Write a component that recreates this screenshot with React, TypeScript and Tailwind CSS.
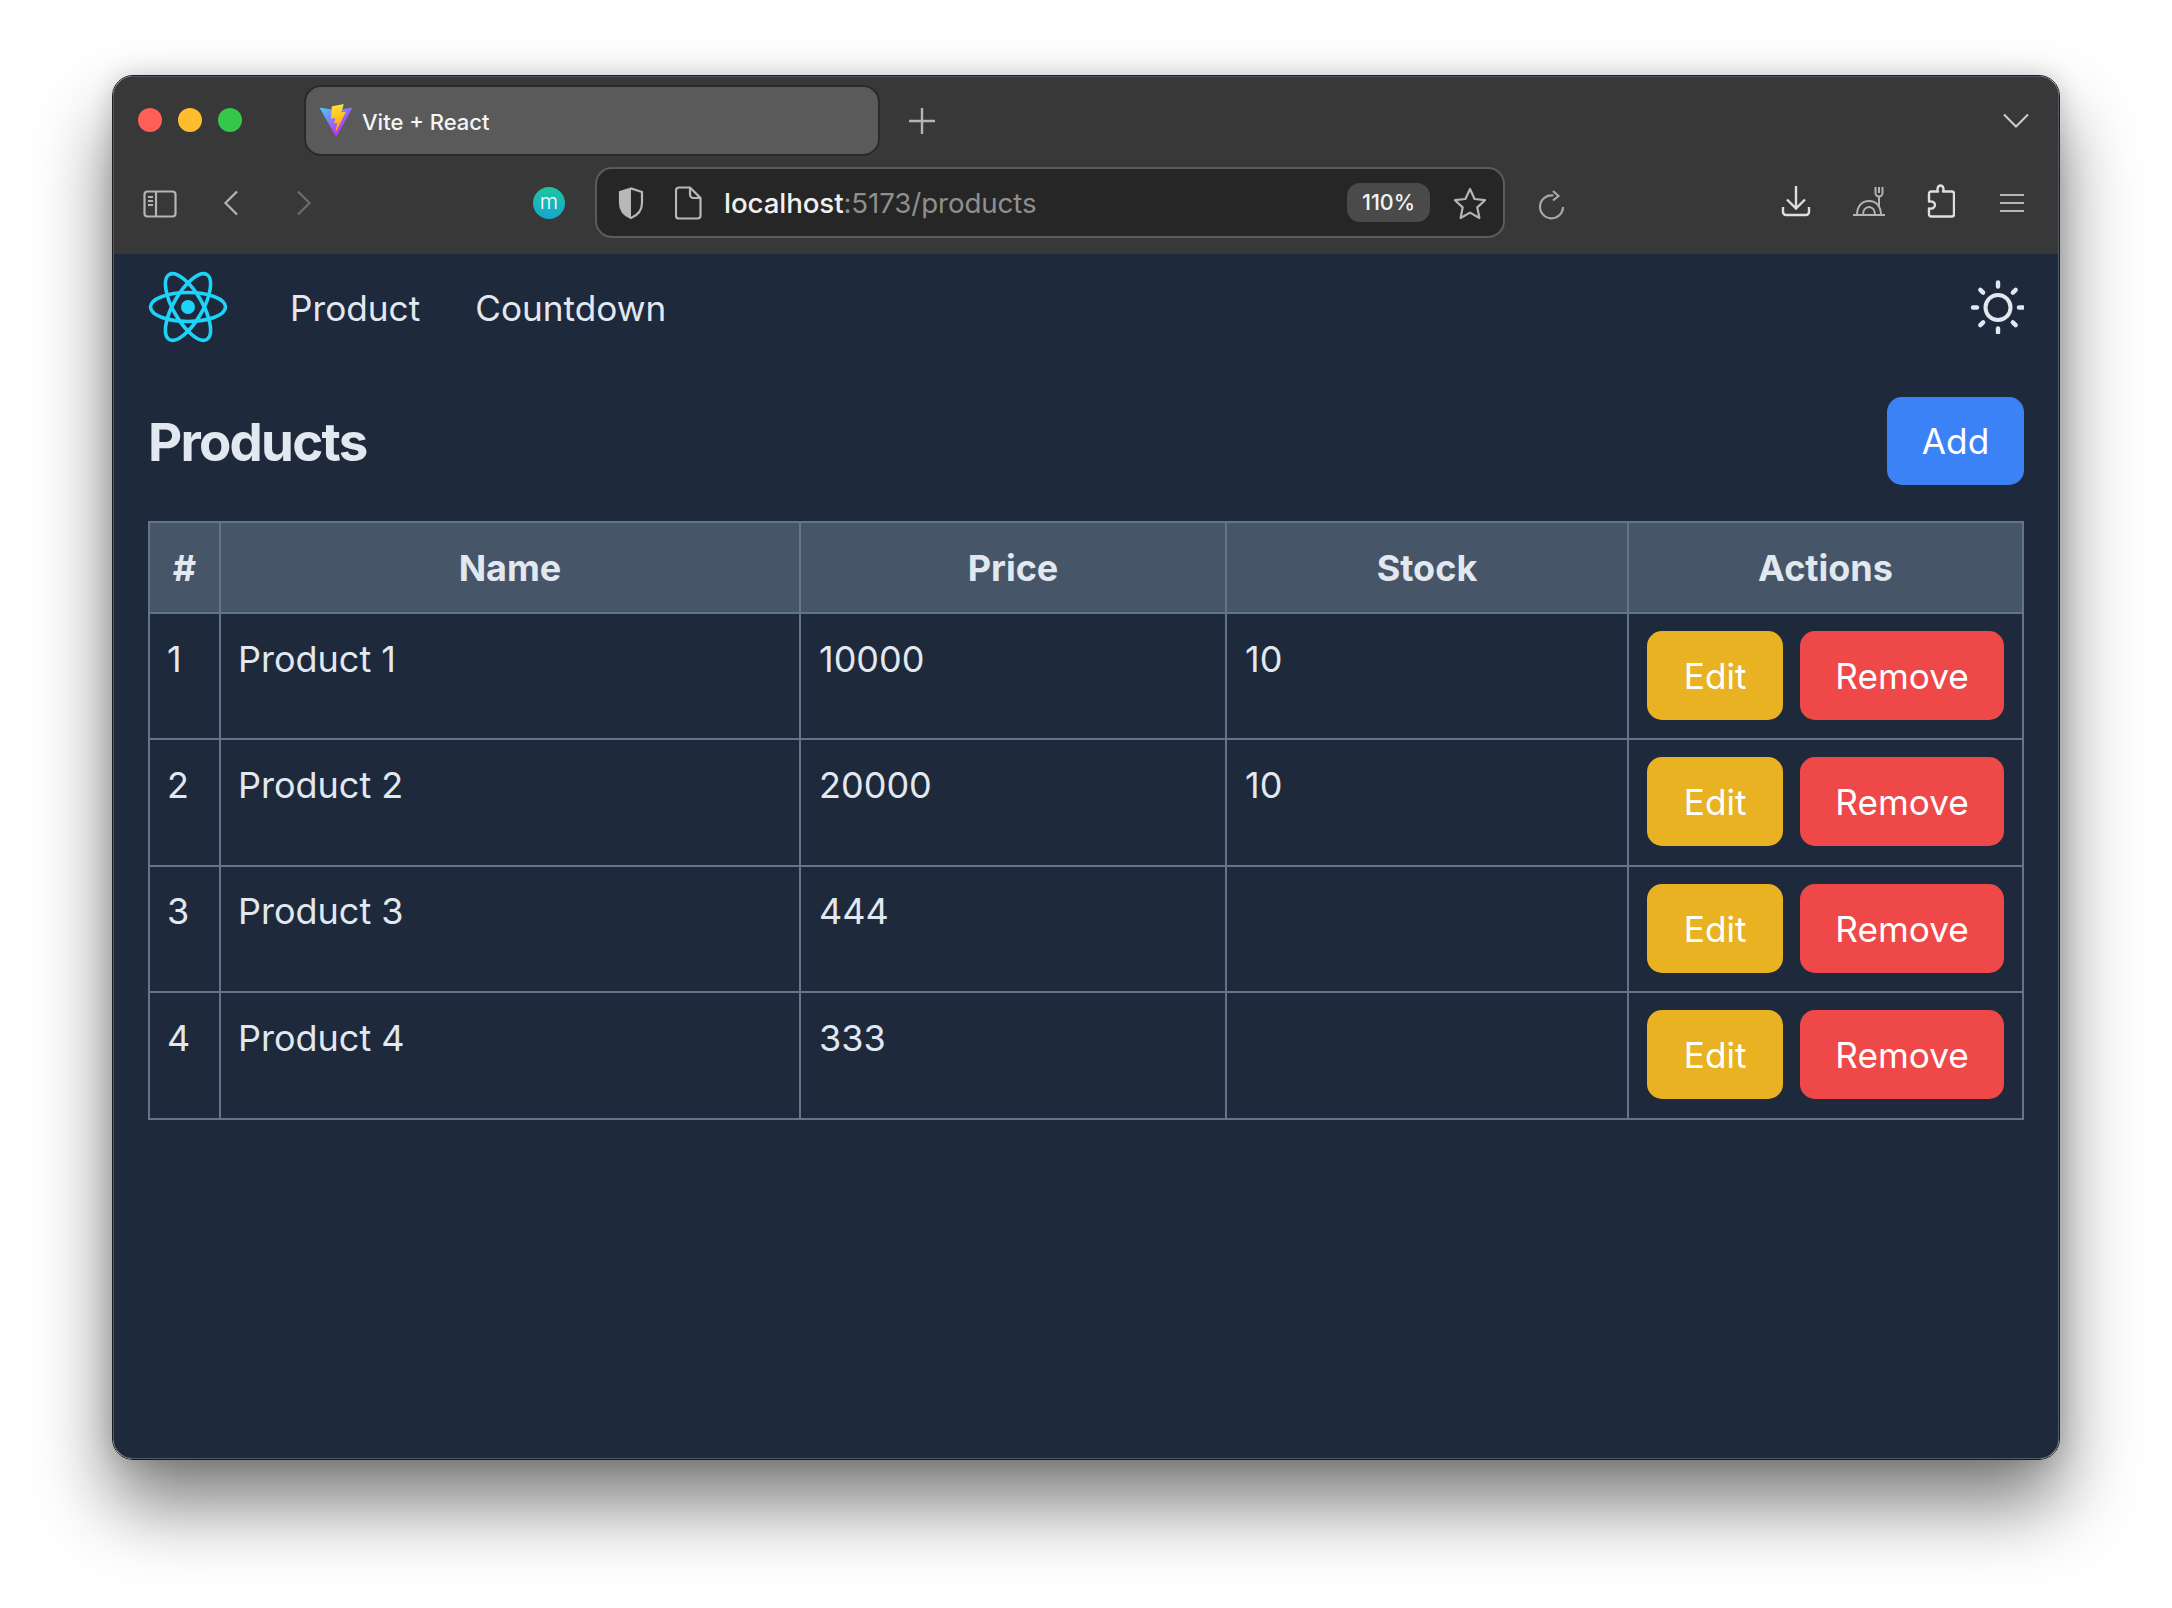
const products = [
  { id: 1, name: 'Product 1', price: '10000', stock: '10' },
  { id: 2, name: 'Product 2', price: '20000', stock: '10' },
  { id: 3, name: 'Product 3', price: '444', stock: '' },
  { id: 4, name: 'Product 4', price: '333', stock: '' },
];

function ViteLogo() {
  return (
    <svg width="34" height="33" viewBox="0 0 410 404" className="shrink-0">
      <defs>
        <linearGradient id="va" x1="6" y1="33" x2="235" y2="344" gradientUnits="userSpaceOnUse">
          <stop stopColor="#41D1FF" />
          <stop offset="1" stopColor="#BD34FE" />
        </linearGradient>
        <linearGradient id="vb" x1="194.65" y1="8.8" x2="236.08" y2="292.99" gradientUnits="userSpaceOnUse">
          <stop stopColor="#FFEA83" />
          <stop offset="0.083" stopColor="#FFDD35" />
          <stop offset="1" stopColor="#FFA800" />
        </linearGradient>
      </defs>
      <path d="M399.641 59.5246L215.643 388.545C211.844 395.338 202.084 395.378 198.228 388.618L10.5817 59.5563C6.38087 52.1896 12.6802 43.2665 21.0281 44.7586L205.223 77.6824C206.398 77.8924 207.601 77.8904 208.776 77.6763L389.119 44.8058C397.439 43.2894 403.768 52.1434 399.641 59.5246Z" fill="url(#va)" />
      <path d="M292.965 1.5744L156.801 28.2552C154.563 28.6937 152.906 30.5903 152.771 32.8664L144.395 174.33C144.198 177.662 147.258 180.248 150.51 179.498L188.42 170.749C191.967 169.931 195.172 173.055 194.443 176.622L183.18 231.775C182.422 235.487 185.907 238.661 189.532 237.56L212.947 230.446C216.577 229.344 220.065 232.527 219.297 236.242L201.398 322.875C200.278 328.294 207.486 331.249 210.492 326.603L212.5 323.5L323.454 102.072C325.312 98.3645 322.108 94.137 318.036 94.9228L279.014 102.454C275.347 103.161 272.227 99.746 273.262 96.1583L298.731 7.86689C299.767 4.27314 296.636 0.855181 292.965 1.5744Z" fill="url(#vb)" />
    </svg>
  );
}

function ReactLogo() {
  return (
    <svg width="80" height="72" viewBox="-40 -36 80 72" className="shrink-0">
      <g fill="none" stroke="#1fd3f8" strokeWidth="3.6">
        <ellipse rx="37.5" ry="14.5" />
        <ellipse rx="37.5" ry="14.5" transform="rotate(60)" />
        <ellipse rx="37.5" ry="14.5" transform="rotate(120)" />
      </g>
      <circle r="7" fill="#1fd3f8" />
    </svg>
  );
}

function Sun() {
  const rays = [0, 45, 90, 135, 180, 225, 270, 315];
  return (
    <svg width="54" height="54" viewBox="-28 -27.500 54 54" className="shrink-0">
      <circle r="12.5" fill="none" stroke="#e2e8f0" strokeWidth="4" />
      {rays.map((a) => (
        <line key={a} x1="0" y1="-21" x2="0" y2="-25" stroke="#e2e8f0" strokeWidth="4.4" strokeLinecap="round" transform={`rotate(${a})`} />
      ))}
    </svg>
  );
}

function Row({ id, name, price, stock }: { id: number; name: string; price: string; stock: string }) {
  const cell = 'border-2 border-[#64748b] align-top pt-[18.5px] pb-0 font-normal';
  return (
    <tr className="h-[126.4px]">
      <td className={`${cell} px-[17px]`}>{id}</td>
      <td className={`${cell} px-[17px]`}>{name}</td>
      <td className={`${cell} px-[18px]`}>{price}</td>
      <td className={`${cell} px-[18px]`}>{stock}</td>
      <td className="border-2 border-[#64748b] align-top px-[18px] pt-[17px]">
        <div className="flex gap-[17px] text-[35.2px] leading-[53px] text-white">
          <button className="h-[89px] w-[137px] rounded-[15px] bg-[#e9b223] pt-[2px]">Edit</button>
          <button className="h-[89px] w-[205px] rounded-[15px] bg-[#ef4848] pt-[2px]">Remove</button>
        </div>
      </td>
    </tr>
  );
}

export default function App() {
  const th = 'border-2 border-[#64748b] bg-[#475569] font-bold text-center p-0 pt-[2px]';
  return (
    <div className="h-[1608px] w-[2172px] overflow-hidden bg-white pl-[112px] pt-[75px] font-['Inter',sans-serif]">
      <div className="h-[1385px] w-[1948px] rounded-[21px] border border-[#1c1c1c] shadow-[0_44px_76px_rgba(0,0,0,0.52),0_0_24px_rgba(0,0,0,0.16)]">
        <div className="flex h-full flex-col overflow-hidden rounded-[20px] border border-[#525866] bg-[#1e293b]">
          {/* browser chrome */}
          <div className="flex h-[177px] shrink-0 flex-col bg-[#383838] text-white">
            <div className="flex h-[87px] items-start pt-[8px]">
              <div className="ml-[24px] mt-[23px] flex gap-[16px]">
                <span className="h-6 w-6 rounded-full bg-[#ff5f57]" />
                <span className="h-6 w-6 rounded-full bg-[#febc2e]" />
                <span className="h-6 w-6 rounded-full bg-[#34c749]" />
              </div>
              <div className="ml-[62px] flex h-[71px] w-[576px] items-center gap-[9px] rounded-[17px] border-2 border-[#2a2a2a] bg-[#5a5a5a] pl-[13px]">
                <ViteLogo />
                <span className="mt-[3px] text-[22px] font-medium text-[#f5f5f5]">Vite + React</span>
              </div>
              <svg width="28" height="28" viewBox="0 0 28 28" className="ml-[28px] mt-[22px]" stroke="#b5b5b5" strokeWidth="2.4">
                <path d="M14 1v26M1 14h26" />
              </svg>
              <svg width="26" height="16" viewBox="0 0 26 16" className="ml-auto mr-[29px] mt-[28px]" fill="none" stroke="#d0d0d0" strokeWidth="2">
                <path d="M1 1.5l12 12 12-12" />
              </svg>
            </div>
            <div className="flex h-[90px] items-start">
              <svg width="34" height="28" viewBox="0 0 34 28" className="ml-[29px] mt-[26px]" fill="none" stroke="#b4b4b4" strokeWidth="2.2">
                <rect x="1.5" y="1.5" width="31" height="25" rx="3" />
                <path d="M13 1.5v25M5 7h5M5 11h5M5 15h5" />
              </svg>
              <svg width="16" height="26" viewBox="0 0 16 26" className="ml-[46px] mt-[26px]" fill="none" stroke="#b4b4b4" strokeWidth="2.2">
                <path d="M14 1.5L2.5 13 14 24.5" />
              </svg>
              <svg width="16" height="26" viewBox="0 0 16 26" className="ml-[57px] mt-[26px]" fill="none" stroke="#6c6c6c" strokeWidth="2.2">
                <path d="M2 1.5L13.5 13 2 24.5" />
              </svg>
              <div className="ml-[221px] mt-[23px] flex h-8 w-8 items-center justify-center rounded-full bg-gradient-to-b from-[#22c4a0] to-[#17a6cf] pb-[3px] text-[21px] font-light text-white">m</div>
              <div className="ml-[30px] mt-[3px] flex h-[71px] w-[910px] items-center rounded-[17px] border-2 border-[#5b5b5b] bg-[#262626]">
                <svg width="26" height="32" viewBox="0 0 26 32" className="ml-[21px]" fill="none">
                  <path d="M13 1.5L2 5v11c0 8 5 12.5 11 15 6-2.5 11-7 11-15V5z" stroke="#b8b8b8" strokeWidth="2.2" />
                  <path d="M13 1.5L2 5v11c0 8 5 12.5 11 15z" fill="#b8b8b8" />
                </svg>
                <svg width="27" height="34" viewBox="0 0 27 34" className="ml-[31px]" fill="none" stroke="#b8b8b8" strokeWidth="2.2">
                  <path d="M4 1.5h11l10.500 10.500v17.500a3 3 0 0 1-3 3H4a3 3 0 0 1-3-3v-25a3 3 0 0 1 3-3z" />
                  <path d="M15 1.5v7a3.500 3.500 0 0 0 3.500 3.500h7" />
                </svg>
                <span className="ml-[22px] mt-[2px] text-[27.7px] tracking-[-0.1px]">
                  <span className="font-medium text-[#f0f0f0]">localhost</span>
                  <span className="text-[#8f8f8f]">:5173/products</span>
                </span>
                <div className="ml-auto flex h-[39px] w-[83px] items-center justify-center rounded-[13px] bg-[#4a4a4a] text-[21.5px] font-medium text-[#f4f4f4]">110%</div>
                <svg width="34" height="32" viewBox="0 0 34 32" className="ml-[23px] mr-[16px]" fill="none" stroke="#b4b4b4" strokeWidth="2.2" strokeLinejoin="round">
                  <path d="M17 2l4.600 10 10.400 1.200-7.700 7.200 2.100 10.600-9.400-5.400-9.400 5.400 2.100-10.600L2 13.200l10.400-1.200z" />
                </svg>
              </div>
              <svg width="28" height="30" viewBox="0 0 28 30" className="ml-[33px] mt-[26px]" fill="none" stroke="#a8a8a8" strokeWidth="2.2">
                <path d="M15.500 5.500A11.500 11.500 0 1 0 25 17M15 1l5.500 5-5.500 4.500" />
              </svg>
              <svg width="30" height="32" viewBox="0 0 30 32" className="ml-[215px] mt-[21px]" fill="none" stroke="#dedede" strokeWidth="2.4">
                <path d="M15 1v22M6 14.500l9 9 9-9M2 22v5a3 3 0 0 0 3 3h20a3 3 0 0 0 3-3v-5" />
              </svg>
              <svg width="34" height="32" viewBox="0 0 34 32" className="ml-[41px] mt-[21px]" fill="none" stroke="#b4b4b4" strokeWidth="2">
                <path d="M1 30h32M5 30c0-9 5-14 12-14s12 5 12 14M11 30c0-5 2.500-8 6-8s6 3 6 8M23.500 2v6a3.500 3.500 0 0 0 7 0V2M27 2v6M27 11.500v10" />
              </svg>
              <svg width="29" height="34" viewBox="0 0 29 34" className="ml-[40px] mt-[20px]" fill="none" stroke="#dedede" strokeWidth="2.4" strokeLinejoin="round">
                <path d="M12 7.500c-1-1.500-.5-6 2.500-6s3.500 4.500 2.500 6h9a2 2 0 0 1 2 2v21a2 2 0 0 1-2 2H5a2 2 0 0 1-2-2v-6c3 .5 6-.5 6-3.500s-3.500-4-6-3.500V9.500a2 2 0 0 1 2-2z" />
              </svg>
              <svg width="26" height="20" viewBox="0 0 26 20" className="ml-[44px] mt-[29px]" stroke="#b8b8b8" strokeWidth="2.2">
                <path d="M1 2h24M1 10h24M1 18h24" />
              </svg>
            </div>
          </div>

          {/* page */}
          <div className="flex flex-1 flex-col pl-[34px] pr-[34px] text-[35.2px] text-[#e2e8f0]">
            <nav className="flex h-[106px] w-full items-center leading-[53px]">
              <ReactLogo />
              <a className="ml-[62px] mt-[2px]">Product</a>
              <a className="ml-[55px] mt-[2px]">Countdown</a>
              <div className="ml-auto">
                <Sun />
              </div>
            </nav>
            <div className="mt-[37px] flex h-[88px] items-center justify-between">
              <h1 className="mt-[4px] text-[52.8px] font-bold tracking-[-1.75px]">Products</h1>
              <button className="h-[88px] w-[137px] rounded-[15px] bg-[#3b82f6] text-white">Add</button>
            </div>
            <table className="mt-[36px] w-[1874px] table-fixed border-collapse text-[36px] leading-[53px]">
              <colgroup>
                <col className="w-[71px]" />
                <col className="w-[580px]" />
                <col className="w-[426px]" />
                <col className="w-[402px]" />
                <col className="w-[395px]" />
              </colgroup>
              <thead>
                <tr className="h-[91px]">
                  <th className={th}>#</th>
                  <th className={th}>Name</th>
                  <th className={th}>Price</th>
                  <th className={th}>Stock</th>
                  <th className={th}>Actions</th>
                </tr>
              </thead>
              <tbody>
                {products.map((p) => (
                  <Row key={p.id} {...p} />
                ))}
              </tbody>
            </table>
          </div>
        </div>
      </div>
    </div>
  );
}
